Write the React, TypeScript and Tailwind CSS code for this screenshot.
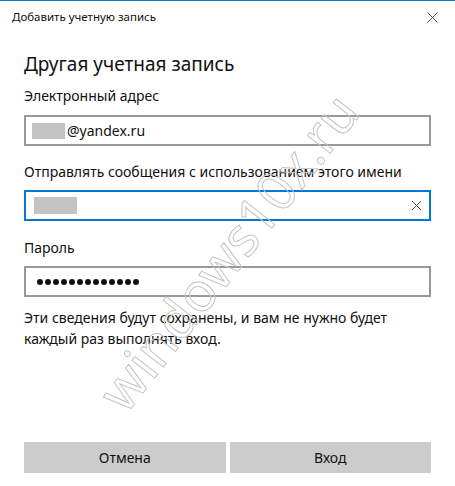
import { X } from 'lucide-react';

const font = "font-['Noto_Sans',_'Open_Sans',_sans-serif]";

export default function App() {
    return (
        <div className={`relative h-[486px] w-[455px] overflow-hidden border-t border-[#1979ca] bg-white text-[#111] ${font}`}>
            <div className="flex h-[32px] items-center justify-between pl-3 pr-[13px]">
                <span className="text-[11.5px]">Добавить учетную запись</span>
                <X className="h-[19px] w-[19px] text-[#222]" strokeWidth={1} />
            </div>

            <div className="flex flex-col px-6">
                <h1 className="mt-[17px] text-[19px] leading-7">Другая учетная запись</h1>

                <label className="mt-2 text-[14px] leading-5">Электронный адрес</label>
                <div className="mt-[9px] flex h-[31px] items-center border-2 border-[#999] pl-[6px]">
                    <span className="h-[16px] w-[33px] bg-[#c3c3c3]" />
                    <span className="ml-[2px] text-[14px]">@yandex.ru</span>
                </div>

                <label className="mt-4 text-[14px] leading-5">Отправлять сообщения с использованием этого имени</label>
                <div className="mt-2 flex h-[31px] items-center justify-between border-2 border-[#0078d7] pl-2 pr-[4px]">
                    <span className="h-[17px] w-[43px] bg-[#c3c3c3]" />
                    <X className="h-[17px] w-[17px] text-[#444]" strokeWidth={1.3} />
                </div>

                <label className="mt-[17px] text-[14px] leading-5">Пароль</label>
                <div className="mt-2 flex h-[31px] items-center gap-[2px] border-2 border-[#999] pl-[11px]">
                    {Array.from({ length: 13 }).map((_, i) => (
                        <span key={i} className="h-[6px] w-[6px] rounded-full bg-[#111]" />
                    ))}
                </div>

                <p className="mt-[10px] text-[14px] leading-[21px]">
                    Эти сведения будут сохранены, и вам не нужно будет каждый раз выполнять вход.
                </p>

                <div className="mt-[93px] grid grid-cols-2 gap-1">
                    <button className="h-[31px] bg-[#cccccc] text-[14px]">Отмена</button>
                    <button className="h-[31px] bg-[#cccccc] text-[14px]">Вход</button>
                </div>
            </div>

            <div className="pointer-events-none absolute left-[36px] top-[210px] -rotate-[52deg] text-[54px] text-transparent [-webkit-text-stroke:1px_#c4c4c4]">
                windows10x.ru
            </div>
        </div>
    );
}
